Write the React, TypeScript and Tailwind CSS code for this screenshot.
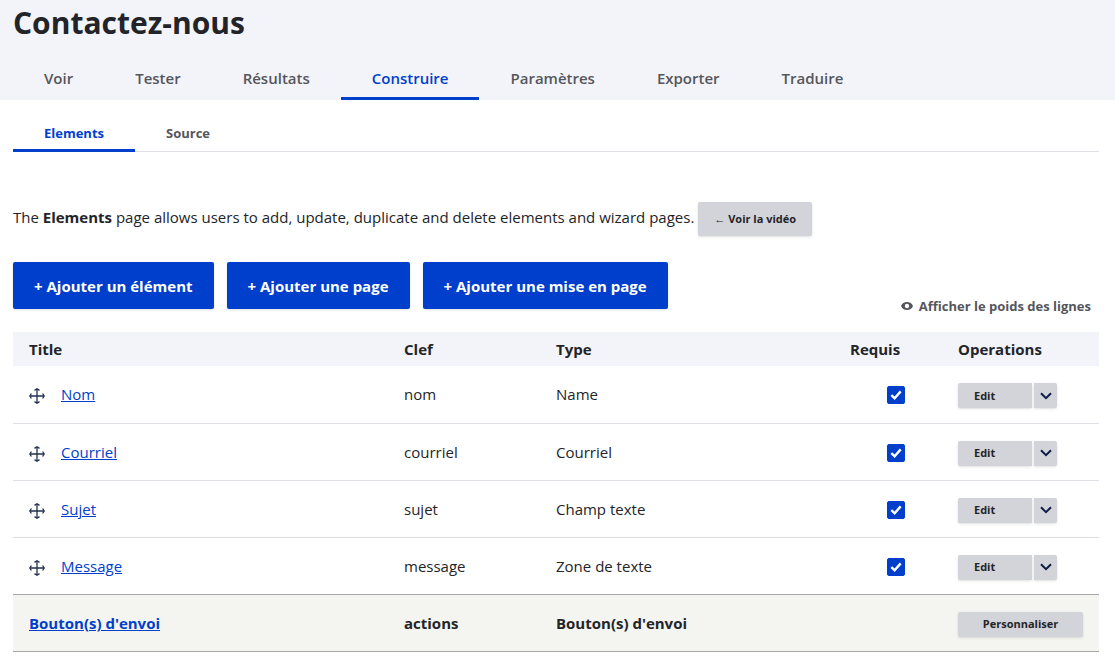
import React from 'react';
import clsx from 'clsx';

interface ElementRow {
  title: string;
  clef: string;
  type: string;
}

const primaryTabs = ['Voir', 'Tester', 'Résultats', 'Construire', 'Paramètres', 'Exporter', 'Traduire'];
const secondaryTabs = ['Elements', 'Source'];
const actions = ['Ajouter un élément', 'Ajouter une page', 'Ajouter une mise en page'];

const rows: ElementRow[] = [
  { title: 'Nom', clef: 'nom', type: 'Name' },
  { title: 'Courriel', clef: 'courriel', type: 'Courriel' },
  { title: 'Sujet', clef: 'sujet', type: 'Champ texte' },
  { title: 'Message', clef: 'message', type: 'Zone de texte' },
];

const MoveIcon = () => (
  <svg width="16" height="16" viewBox="0 0 16 16" fill="none" stroke="#222e4e" strokeWidth="1.3" className="mt-1 shrink-0">
    <path d="M8 1v14M1 8h14" />
    <path d="M5.500 2.400 8 .8l2.500 1.600M5.500 13.600 8 15.200l2.500-1.600M2.400 5.500.8 8l1.600 2.500M13.600 5.500 15.200 8l-1.600 2.500" />
  </svg>
);

const EyeIcon = () => (
  <svg width="12" height="8" viewBox="0 0 12 8" fill="#55565b">
    <path
      fillRule="evenodd"
      d="M6 0C3.2 0 1 1.6 0 4c1 2.4 3.2 4 6 4s5-1.600 6-4C11 1.600 8.800 0 6 0Zm0 6.200A2.200 2.200 0 1 1 6 1.800a2.200 2.200 0 0 1 0 4.400Z"
    />
  </svg>
);

const ChevronIcon = () => (
  <svg width="12" height="8" viewBox="0 0 12 8" fill="none" stroke="#0f1b45" strokeWidth="2">
    <path d="M1 1.300 6 6.200l5-4.900" />
  </svg>
);

const RequiredCheckbox = ({ label }: { label: string }) => (
  <span className="grid place-items-center">
    <input
      type="checkbox"
      defaultChecked
      aria-label={label}
      className="peer col-start-1 row-start-1 size-[18px] appearance-none rounded-xs border border-[#8e929c] checked:border-[#003ecc] checked:bg-[#003ecc]"
    />
    <svg
      width="12"
      height="10"
      viewBox="0 0 12 10"
      fill="none"
      stroke="#fff"
      strokeWidth="2.400"
      className="pointer-events-none invisible col-start-1 row-start-1 peer-checked:visible"
    >
      <path d="M1.300 5.200 4.600 8.200 10.700 1.400" />
    </svg>
  </span>
);

const Tabs = ({ items, active, label, small }: { items: string[]; active: string; label: string; small?: boolean }) => (
  <nav aria-label={label} className="flex">
    {items.map((item) => (
      <a
        key={item}
        href="#"
        className={clsx(
          'border-b-3 px-[31px] pt-2',
          small ? '-mb-px pb-[6px] text-[13px] leading-5 font-bold' : 'pb-[7px] text-[15px] leading-6 font-semibold',
          item === active ? 'border-[#003ecc] text-[#003ecc]' : 'border-transparent text-[#55565b]'
        )}
      >
        {item}
      </a>
    ))}
  </nav>
);

export default function App() {
  return (
    <div className="min-h-screen bg-white font-['Open_Sans','Noto_Sans',sans-serif] text-[15px] leading-6 text-[#232429]">
      <header className="bg-[#f3f4f9] pr-4 pl-[13px]">
        <h1 className="pt-[3px] pb-[15px] text-[30px] leading-10 font-bold">Contactez-nous</h1>
        <Tabs items={primaryTabs} active="Construire" label="Onglets principaux" />
      </header>

      <main className="pr-4 pl-[13px]">
        <div className="mt-[15px] border-b border-[#dedfe4]">
          <Tabs items={secondaryTabs} active="Elements" label="Onglets secondaires" small />
        </div>

        <div className="mt-[50px] flex items-center gap-1">
          <p className="pb-1">
            The <strong>Elements</strong> page allows users to add, update, duplicate and delete elements and wizard pages.
          </p>
          <button className="h-[34px] rounded-xs bg-[#d3d4d9] px-4 text-[11px] font-bold shadow">← Voir la vidéo</button>
        </div>

        <div className="mt-[26px] flex items-start gap-[13px]">
          {actions.map((action) => (
            <button key={action} className="h-[47px] rounded-xs bg-[#003ecc] px-[21px] font-bold text-white shadow">
              + {action}
            </button>
          ))}
          <button className="mt-8 mr-2 ml-auto flex items-center gap-[6px] text-[13px] font-bold text-[#55565b]">
            <EyeIcon />
            Afficher le poids des lignes
          </button>
        </div>

        <table className="mt-[14px] w-full table-fixed">
          <thead>
            <tr className="h-[34px] bg-[#f3f4f9] text-left">
              <th className="px-4">Title</th>
              <th className="w-[152px] px-4">Clef</th>
              <th className="w-[294px] px-4">Type</th>
              <th className="w-[124px] px-4">Requis</th>
              <th className="w-[141px] pr-4">Operations</th>
            </tr>
          </thead>
          <tbody>
            {rows.map((row, index) => (
              <tr
                key={row.title}
                className={clsx('h-[57px] border-b', index === rows.length - 1 ? 'border-[#a6a7a9]' : 'border-[#dedfe4]')}
              >
                <td className="px-4">
                  <div className="flex items-center gap-4">
                    <MoveIcon />
                    <a href="#" className="text-[#003ecc] underline">
                      {row.title}
                    </a>
                  </div>
                </td>
                <td className="px-4">{row.clef}</td>
                <td className="px-4">{row.type}</td>
                <td className="px-4 pt-[2px]">
                  <RequiredCheckbox label={`Requis : ${row.title}`} />
                </td>
                <td className="pt-[3px] pr-4">
                  <div className="flex gap-[2px]">
                    <button className="h-[25px] w-[74px] rounded-l-xs bg-[#d3d4d9] pl-4 text-left text-[11px] font-bold shadow">
                      Edit
                    </button>
                    <button
                      aria-label="Autres opérations"
                      className="flex h-[25px] w-[23px] items-center justify-center rounded-r-xs bg-[#d3d4d9] shadow"
                    >
                      <ChevronIcon />
                    </button>
                  </div>
                </td>
              </tr>
            ))}
            <tr className="h-[57px] border-b border-[#a6a7a9] bg-[#f4f5f0] font-bold">
              <td className="px-4">
                <a href="#" className="text-[#003ecc] underline">
                  Bouton(s) d'envoi
                </a>
              </td>
              <td className="px-4">actions</td>
              <td className="px-4">Bouton(s) d'envoi</td>
              <td />
              <td className="pt-[3px] pr-4">
                <button className="flex h-[25px] w-full items-center justify-center rounded-xs bg-[#d3d4d9] text-[11px] font-bold shadow">
                  Personnaliser
                </button>
              </td>
            </tr>
          </tbody>
        </table>
      </main>
    </div>
  );
}
